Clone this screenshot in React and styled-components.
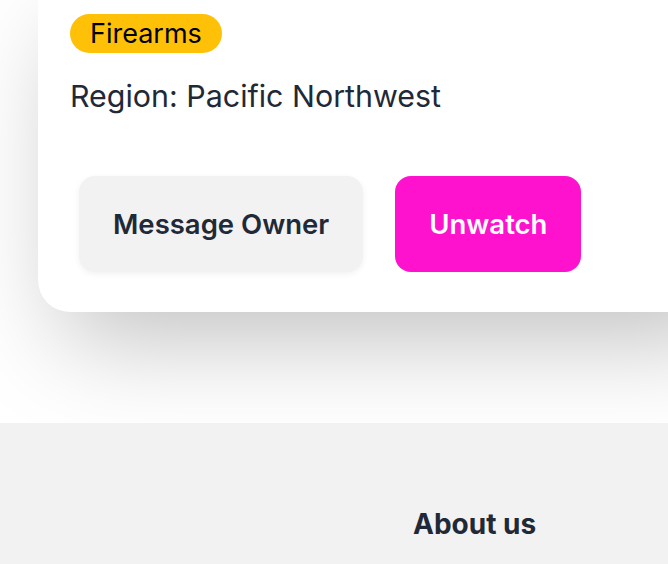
import React from "react";
import styled, { createGlobalStyle } from "styled-components";

const GlobalStyle = createGlobalStyle`
  body {
    margin: 0;
    background: #ffffff;
    font-family: Inter, "Noto Sans", sans-serif;
    color: #1f2937;
    overflow: hidden;
  }
`;

const App = () => {
  return (
    <Page>
      <GlobalStyle />
      <Top>
        <Card>
          <Badge>Firearms</Badge>
          <Region>Region: Pacific Northwest</Region>
          <Actions>
            <Button>Message Owner</Button>
            <Button primary>Unwatch</Button>
          </Actions>
        </Card>
      </Top>
      <Footer>
        <FooterCol>
          <FooterTitle>About us</FooterTitle>
        </FooterCol>
      </Footer>
    </Page>
  );
};

// STYLED COMPONENTS

const Page = styled.div`
  width: 668px;
  height: 564px;
  overflow: hidden;
`;

const Top = styled.div`
  display: flow-root;
  height: 423px;
  padding-left: 38px;
  box-sizing: border-box;
`;

const Card = styled.div`
  display: flex;
  flex-direction: column;
  align-items: flex-start;
  width: 720px;
  margin-top: -40px;
  padding: 54px 32px 40px 32px;
  box-sizing: border-box;
  background: #ffffff;
  border-radius: 32px;
  box-shadow: 0 50px 100px -24px rgba(0, 0, 0, 0.25);
`;

const Badge = styled.span`
  display: inline-flex;
  align-items: center;
  height: 39px;
  padding: 0 20px;
  border-radius: 20px;
  background: #ffc107;
  color: #000000;
  font-size: 27px;
  line-height: 1;
`;

const Region = styled.p`
  margin: 21px 0 0 0;
  font-size: 30.4px;
  line-height: 44px;
  color: #1f2937;
`;

const Actions = styled.div`
  display: flex;
  gap: 32px;
  margin-top: 58px;
  padding-left: 9px;
`;

const Button = styled.button`
  height: 96px;
  padding: 0 34px;
  border: none;
  border-radius: 16px;
  font-family: Inter, "Noto Sans", sans-serif;
  font-size: 27.5px;
  font-weight: 600;
  background: ${(p) => (p.primary ? "#ff12ce" : "#f2f2f2")};
  color: ${(p) => (p.primary ? "#ffffff" : "#1f2937")};
  box-shadow: ${(p) =>
    p.primary ? "none" : "0 2px 6px rgba(0, 0, 0, 0.06)"};
`;

const Footer = styled.footer`
  height: 141px;
  background: #f2f2f2;
  padding-left: 413px;
  padding-top: 83px;
  box-sizing: border-box;
`;

const FooterCol = styled.div`
  display: flex;
  flex-direction: column;
`;

const FooterTitle = styled.h6`
  margin: 0;
  font-size: 28px;
  font-weight: 700;
  line-height: 36px;
  color: #1f2937;
`;

export default App;
